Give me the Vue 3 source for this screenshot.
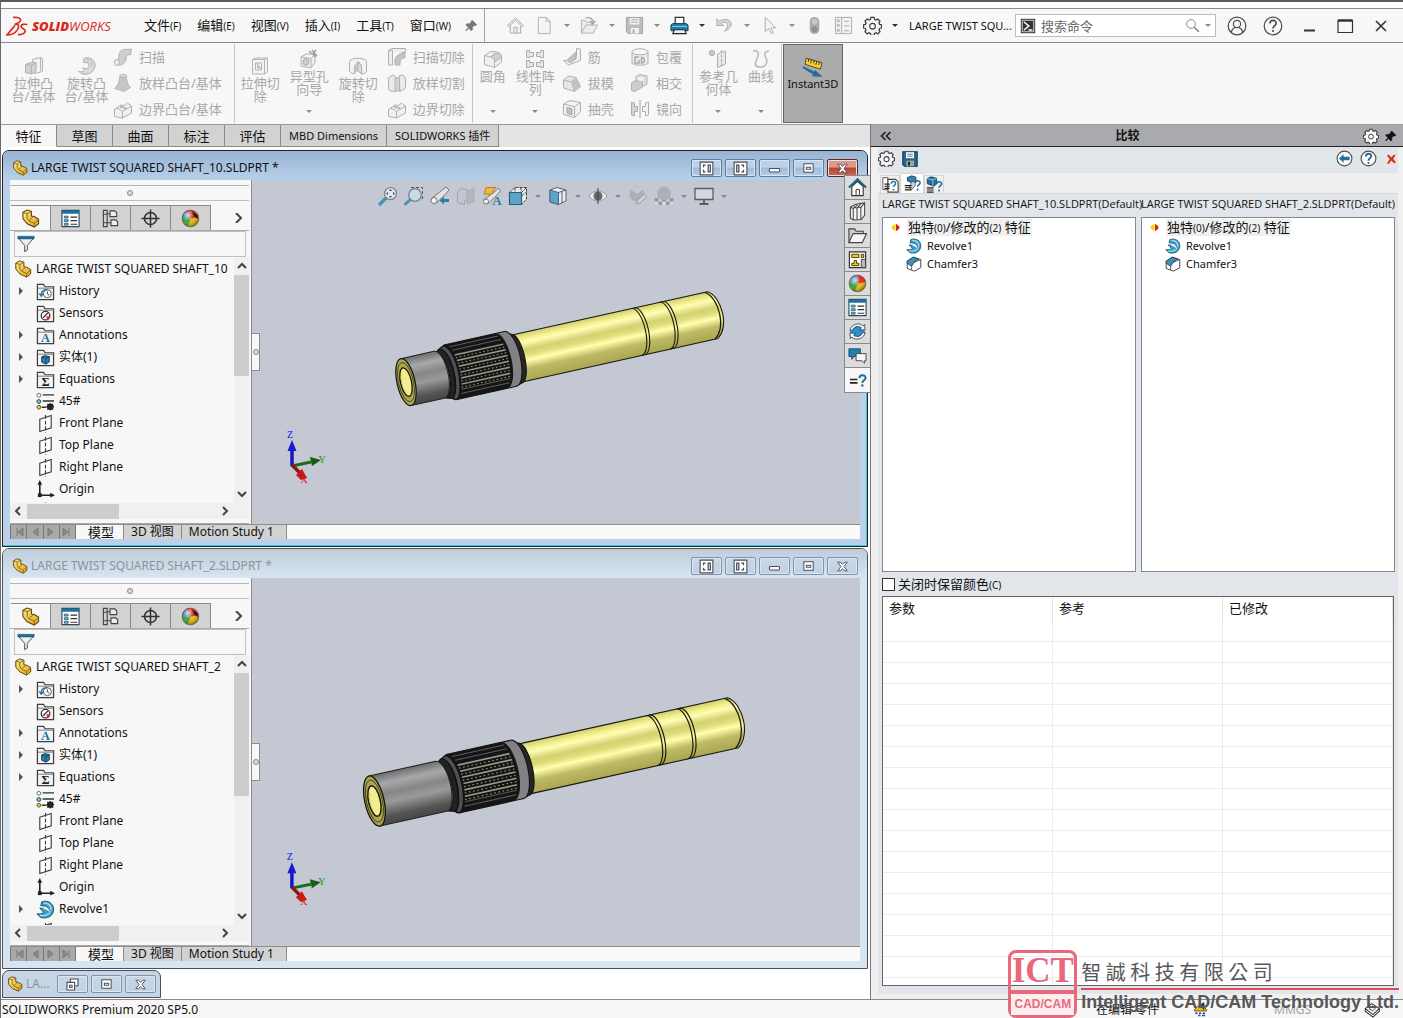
<template>
  <div class="app">
    <svg class="sprite" width="0" height="0" aria-hidden="true">
      <defs>
        <linearGradient id="g-gold" gradientUnits="userSpaceOnUse" x1="0" y1="-23" x2="0" y2="25">
          <stop offset="0" stop-color="#cfcd6c" /><stop offset=".12" stop-color="#f3f08f" /><stop offset=".2" stop-color="#fffdb4" />
          <stop offset=".36" stop-color="#d3d171" /><stop offset=".46" stop-color="#dfdc7a" /><stop offset=".58" stop-color="#ffffae" />
          <stop offset=".76" stop-color="#bdb964" /><stop offset="1" stop-color="#aaa654" />
        </linearGradient>
        <linearGradient id="g-steel" gradientUnits="userSpaceOnUse" x1="0" y1="-24" x2="0" y2="24">
          <stop offset="0" stop-color="#6e6e6e" /><stop offset=".2" stop-color="#a8a8aa" /><stop offset=".4" stop-color="#868688" />
          <stop offset=".58" stop-color="#9a9a9c" /><stop offset=".85" stop-color="#545454" /><stop offset="1" stop-color="#474747" />
        </linearGradient>
        <linearGradient id="g-part" x1="0" y1="0" x2="1" y2="1">
          <stop offset="0" stop-color="#ffe98a" /><stop offset="1" stop-color="#e2a51a" />
        </linearGradient>
        <radialGradient id="g-shine" cx=".35" cy=".3" r=".7">
          <stop offset="0" stop-color="#fff" stop-opacity=".8" /><stop offset=".5" stop-color="#fff" stop-opacity="0" /><stop offset="1" stop-color="#000" stop-opacity=".35" />
        </radialGradient>
      </defs>

      <!-- title bar -->
      <symbol id="i-pin" viewBox="0 0 20 20"><path d="M11 3l6 6-2 1-1-.5-3 3 .2 3.200-1.400 1.300-3.600-3.600L3 17l-.7-.7 3.500-3.600L2.500 9 4 7.800l3 .2 3-3-.3-1z" fill="currentColor" stroke="currentColor" /></symbol>
      <symbol id="i-home" viewBox="0 0 20 20"><path d="M1.500 10L10 2l8.500 8-1.300 1.300L10 4.500l-7.200 6.800zM4.500 10.500V18h11v-7.500M8.500 18v-6h3v6" fill="#f2f2f2" stroke="#a9a9a9" /></symbol>
      <symbol id="i-doc" viewBox="0 0 20 20"><path d="M3.500 1.500h8.500l4 4v13H3.500zM12 1.500v4h4" fill="#f5f5f5" stroke="#b0b0b0" /></symbol>
      <symbol id="i-open" viewBox="0 0 20 20"><path d="M1.500 18V4.500h4l1 2h6V10M1.500 18L6 9.500h12.500L14 18z" fill="#ececec" stroke="#b0b0b0" /><path d="M6 2c5-1 8 1 7.500 5M10.500 5l3 3.500L16 5" fill="none" stroke="#a6a6a6" stroke-width="1.500" /></symbol>
      <symbol id="i-save" viewBox="0 0 20 20"><path d="M1.500 1.500h17v17h-15l-2-2z" fill="#bdbdbd" stroke="#a3a3a3" /><path d="M5 2h10v7H5zM6 12.500h8.500v6H6z" fill="#f1f1f1" /><path d="M6.500 4h7M6.500 6.500h7" stroke="#aaa" /><path d="M8 14h2v4H8z" fill="#a8a8a8" /></symbol>
      <symbol id="i-print" viewBox="0 0 20 20"><path d="M5.500 9V1.500h9V9" fill="#fff" stroke="#333" stroke-width="1.300" /><path d="M1 9.500l2-1.500h14l2 1.500v6H1z" fill="#1f7ea8" stroke="#123f56" /><path d="M2 11h16" stroke="#8cd0ec" /><path d="M4.500 14.500h11l1.500 4H3z" fill="#e8f4fa" stroke="#222" stroke-width="1.200" /></symbol>
      <symbol id="i-undo" viewBox="0 0 20 20"><path d="M2 3v7h7L6.500 7.500C10 5.500 14 7 13 11c-.5 2-1.500 3.500-3 5 4-1.500 7-4 7-7.500C17 3.500 10 2 4.500 5.500z" fill="#d6d6d6" stroke="#ababab" /></symbol>
      <symbol id="i-cursor" viewBox="0 0 20 20"><path d="M5.500 1.500v15l4-3.500 2.300 5.500 2.200-1-2.300-5h5z" fill="#f4f4f4" stroke="#ababab" /></symbol>
      <symbol id="i-traffic" viewBox="0 0 20 20"><rect x="5" y="1" width="10" height="18" rx="5" fill="#a9a9a9" /><circle cx="10" cy="6" r="3" fill="#c7c7c7" /><circle cx="10" cy="14" r="3" fill="#8f8f8f" /></symbol>
      <symbol id="i-list" viewBox="0 0 20 20"><path d="M1.500 1.500h17v17h-17zM8 1.500v17M3.500 4h2v2h-2zM3.500 9h2v2h-2zM3.500 14h2v2h-2zM10.500 5.500H16M10.500 10.500H16M10.500 15.500H16" fill="#f4f4f4" stroke="#ababab" /></symbol>
      <symbol id="i-gear" viewBox="0 0 20 20"><path d="M8.300 1.500h3.400l.5 2 1.500.7 1.900-1.100 2.300 2.300-1.100 1.900.7 1.500 2 .5v3.400l-2 .4-.7 1.500 1.100 1.900-2.300 2.300-1.900-1.100-1.500.7-.5 2H8.300l-.5-2-1.500-.7-1.900 1.100-2.300-2.300 1.100-1.900-.7-1.500-2-.4V9.300l2-.5.7-1.500-1.100-1.900 2.300-2.300 1.900 1.100 1.500-.7z" fill="#f6f6f6" stroke="#3c3c3c" stroke-width="1.300" /><circle cx="10" cy="10.800" r="3" fill="none" stroke="#3c3c3c" stroke-width="1.200" /></symbol>
      <symbol id="i-terminal" viewBox="0 0 20 20"><rect x="1" y="1" width="18" height="18" fill="#333" /><path d="M2.800 2.800h14.400v14.400H2.800z" fill="none" stroke="#fff" /><path d="M5 5l6 5-6 5M10.500 15h5" fill="none" stroke="#fff" stroke-width="2" /></symbol>
      <symbol id="i-search" viewBox="0 0 20 20"><circle cx="8" cy="8" r="5.800" fill="none" stroke="#8a8a8a" stroke-width="1.300" /><path d="M12.500 12.500l6 6" stroke="#8a8a8a" stroke-width="2" /></symbol>
      <symbol id="i-user" viewBox="0 0 20 20"><g fill="none" stroke="#4d4d4d" stroke-width="1.200"><circle cx="10" cy="10" r="8.800" /><circle cx="10" cy="8" r="3.600" /><path d="M4.200 16c.8-3 3-4.200 4-4.500M15.800 16c-.8-3-3-4.200-4-4.500" /></g></symbol>
      <symbol id="i-help" viewBox="0 0 20 20"><circle cx="10" cy="10" r="8.800" fill="none" stroke="#4d4d4d" stroke-width="1.200" /><path d="M7 7.500c0-4 6.200-4 6.200-.3 0 2.400-3.200 2.600-3.200 5.300" fill="none" stroke="#4d4d4d" stroke-width="1.700" /><circle cx="10" cy="15" r="1.100" fill="#4d4d4d" /></symbol>
      <symbol id="i-helpblue" viewBox="0 0 20 20"><circle cx="10" cy="10" r="8.700" fill="#fff" stroke="#4d4d4d" stroke-width="1.300" /><path d="M7 7.500c0-4 6.200-4 6.200-.3 0 2.400-3.200 2.600-3.200 5.300" fill="none" stroke="#1e6f9b" stroke-width="2.200" /><circle cx="10" cy="15.300" r="1.300" fill="#1e6f9b" /></symbol>
      <symbol id="i-back" viewBox="0 0 20 20"><circle cx="10" cy="10" r="8.700" fill="#fff" stroke="#4d4d4d" stroke-width="1.300" /><path d="M3.500 10L9 5v3h7v4H9v3z" fill="#1e6f9b" /></symbol>
      <symbol id="i-redx" viewBox="0 0 20 20"><path d="M4 5l3-1 3.500 4 4-4.500L16.500 5 13 9.700l4 5-2.500 1.500-4-4-4 4.800L4.300 16l4-6z" fill="#dd2a12" /></symbol>
      <symbol id="i-wmin" viewBox="0 0 20 20"><path d="M5 14.500h11" stroke="#333" stroke-width="2" /></symbol>
      <symbol id="i-wmax" viewBox="0 0 20 20"><path d="M3 4.500h14.500v12H3z" fill="none" stroke="#333" stroke-width="1.200" /><path d="M3 4.500h14.500" stroke="#333" stroke-width="2.500" /></symbol>
      <symbol id="i-wclose" viewBox="0 0 20 20"><path d="M5 5l10 10M15 5L5 15" stroke="#333" stroke-width="1.600" /></symbol>

      <!-- ribbon, all disabled -->
      <symbol id="i-extrude" viewBox="0 0 20 20"><g fill="#f3f3f3" stroke="#b4b4b4"><path d="M8.500 3.500l8-2 2 1v13l-8 2-2-1zM16.500 1.500v13" /><path d="M1.500 8.500l5-2h5.500v9l-4.500 2.500-6-1.500z" fill="#d2d2d2" /><path d="M1.500 8.500l6 1 4.500-3M7.500 9.500V18" fill="none" /></g></symbol>
      <symbol id="i-revolve" viewBox="0 0 20 20"><path d="M7 2.500c6-2.500 11.500 1.500 11 7.500S11 20 4 17.500L1.500 15c3 1.500 6 0 6-1.500l-2-1.500c4 1.500 7-.5 6.500-3S9 6 6.500 6.500z" fill="#d9d9d9" stroke="#b0b0b0" /><path d="M9.500 3.500c4 0 6 3 5 6.500" fill="none" stroke="#bbb" /></symbol>
      <symbol id="i-sweep" viewBox="0 0 20 20"><path d="M1.500 14c5 1 4-2 4.500-6s3-6 8-5.500l4.500-.5-1 6c-4-1-4 1-4.500 4s-3 6.500-7.500 6z" fill="#cfcfcf" stroke="#b0b0b0" /><ellipse cx="4" cy="15.500" rx="2.500" ry="3" fill="#eee" stroke="#b0b0b0" /></symbol>
      <symbol id="i-loft" viewBox="0 0 20 20"><path d="M7 2.500h6.500c0 6 1 9 4 12l-6.500 4-9.500-3c3.500-3 5-7 5.500-13z" fill="#c6c6c6" stroke="#b8b8b8" /><ellipse cx="10.200" cy="2.800" rx="3.300" ry="1.300" fill="#e8e8e8" stroke="#b0b0b0" /></symbol>
      <symbol id="i-boundary" viewBox="0 0 20 20"><path d="M1.500 10.500v7l8 1.500 9-5V7l-4-3-3 2.500L8 6z" fill="#f0f0f0" stroke="#b0b0b0" /><path d="M1.500 10.500c3-2 4-1 8 2l9-5.500M9.500 12.500V19" fill="none" stroke="#b0b0b0" /><path d="M7 8c3-1 4 2 6.500 1" stroke="#b9b9b9" fill="none" stroke-width="2" /></symbol>
      <symbol id="i-cutextrude" viewBox="0 0 20 20"><g fill="#f3f3f3" stroke="#b4b4b4"><path d="M2.500 3.500l3-1.500h12v14l-3 2h-12zM2.500 3.500h12v14.500M14.500 3.500l3-1.500" /><path d="M5.500 7h6v7h-6z" /><path d="M7.500 7v5h4" fill="#ccc" /></g></symbol>
      <symbol id="i-hole" viewBox="0 0 20 20"><path d="M2 8l5-3h9v8.500L12 19l-10-2zM2 8l10 1.500L16 5M12 9.500V19" fill="#f0f0f0" stroke="#b0b0b0" /><ellipse cx="7" cy="13" rx="3" ry="3.300" fill="#ccc" stroke="#aaa" /><path d="M10 2l7 6M13 1l5 6M17 1l-3 4" stroke="#9f9f9f" stroke-width="1.400" /></symbol>
      <symbol id="i-cutrevolve" viewBox="0 0 20 20"><path d="M1.500 6c0-5 17-5 17 0v9.500c-1.500 2-3.500 2.500-5 2.500v-8L10 5.500 6.500 10v8c-2-.5-4-1-5-2.500z" fill="#f3f3f3" stroke="#b0b0b0" /><path d="M10 5.500v9.500l-3.500 3v-8z" fill="#c8c8c8" /><path d="M10 5.500v9.500l3.500 3v-8z" fill="#dedede" stroke="#b0b0b0" /></symbol>
      <symbol id="i-cutsweep" viewBox="0 0 20 20"><path d="M1.500 3.500h4V18h-4zM1.500 3.500l3-2h14v4h-4" fill="#ededed" stroke="#b0b0b0" /><path d="M8 18C7 10 10 6.500 18 6.500V11c-4 0-5 2-5 7z" fill="#c3c3c3" stroke="#b4b4b4" /></symbol>
      <symbol id="i-cutloft" viewBox="0 0 20 20"><path d="M1.500 5l4-3 3.500 2v14l-4 .5-3.500-2zM12 3l4-1 2.500 3v10L13 18.500z" fill="#ebebeb" stroke="#b0b0b0" /><path d="M8 5h4.500v13H8z" fill="#d3d3d3" stroke="#b5b5b5" /></symbol>
      <symbol id="i-fillet" viewBox="0 0 20 20"><path d="M1.500 6.500L8 2.500c6 0 10 1 10.500 5V13l-7 5.500-10-3z" fill="#f1f1f1" stroke="#b0b0b0" /><path d="M1.500 6.500l6 1.500c3 .5 4 2 4 5v5.500M7.500 8L12 4" fill="none" stroke="#b0b0b0" /><path d="M8 8l5-4c4 0 5 1.500 5.500 4.500L11.500 13C11.500 10 11 8.500 8 8z" fill="#cfcfcf" stroke="#b5b5b5" /></symbol>
      <symbol id="i-pattern" viewBox="0 0 20 20"><g fill="#e5e5e5" stroke="#ababab"><path d="M1.500 1.500h3v2h4v4h-4v1h-3zM11.500 3.500h4v-2h3v7h-3v-1h-4zM1.500 11.500h3v2h4v4h-4v1h-3zM11.500 13.500h4v-2h3v7h-3v-1h-4z" /></g></symbol>
      <symbol id="i-rib" viewBox="0 0 20 20"><path d="M1.500 13.500l5 4.500 12-4.500V2l-4-.5v8L9 14z" fill="#f0f0f0" stroke="#b0b0b0" /><path d="M5 13l9-8v7l-6 4z" fill="#c2c2c2" stroke="#b0b0b0" /></symbol>
      <symbol id="i-draft" viewBox="0 0 20 20"><path d="M1.500 15V7L7 3l7 1.500 4.500 9-6 5z" fill="#e6e6e6" stroke="#b0b0b0" /><path d="M1.500 7l8 2L14 4.500M9.500 9l3 9.500" fill="none" stroke="#b0b0b0" /><path d="M9.500 9L14 4.500l4.500 9-6 5z" fill="#c2c2c2" /></symbol>
      <symbol id="i-shell" viewBox="0 0 20 20"><path d="M1.500 5L8 1.500l10.500 2V13l-6 5.500-11-3zM1.500 5l11 2.500 6-4M12.500 7.500v11" fill="#f0f0f0" stroke="#b0b0b0" /><path d="M5 8.500l5 1.200v6l-5-1.200z" fill="#c0c0c0" stroke="#aaa" /></symbol>
      <symbol id="i-wrap" viewBox="0 0 20 20"><path d="M2 5v11c0 3 16 3 16 0V5" fill="#ececec" stroke="#b0b0b0" /><ellipse cx="10" cy="4.800" rx="8" ry="3" fill="#f6f6f6" stroke="#b0b0b0" /><path d="M9 10H5v6h4v-3M11.500 10.500v5.500c4 .5 4-6 0-5.500z" fill="none" stroke="#a9a9a9" stroke-width="1.500" /></symbol>
      <symbol id="i-intersect" viewBox="0 0 20 20"><path d="M6 3.500L10 1.500l7 1.500v8l-4 2.500-7-2z" fill="#dedede" stroke="#b0b0b0" /><path d="M1.500 10l3-2h8v6L4.500 18.500l-3-1z" fill="#cdcdcd" stroke="#b0b0b0" /><ellipse cx="11" cy="6" rx="3" ry="2" fill="#f3f3f3" /></symbol>
      <symbol id="i-mirror" viewBox="0 0 20 20"><path d="M1.500 3l3 1v3.500h3v5h-3V17l-3-1z" fill="#d2d2d2" stroke="#adadad" /><path d="M18.500 3l-3 1v3.500h-3v5h3V17l3-1z" fill="#f3f3f3" stroke="#adadad" /><path d="M10 1v18" stroke="#a2a2a2" /></symbol>
      <symbol id="i-refgeo" viewBox="0 0 20 20"><circle cx="4" cy="4" r="2.700" fill="#c9c9c9" stroke="#b0b0b0" /><path d="M9.500 5l8-3v13l-8 3.500z" fill="#e9e9e9" stroke="#b0b0b0" /><path d="M13.500 1v18" stroke="#a8a8a8" stroke-dasharray="3 1.500" /></symbol>
      <symbol id="i-curve" viewBox="0 0 20 20"><path d="M2 2c4-1 6 1 5 5s-6 10 1 11 9-5 7-9-2-6 3-7" fill="none" stroke="#b8b8b8" stroke-width="1.500" /></symbol>
      <symbol id="i-instant" viewBox="0 0 20 20"><path d="M4 2l15 4.500-1.500 6L3 8z" fill="#f8cf36" stroke="#3c3210" stroke-width=".8" /><path d="M6.500 2.800L6 5.500M9 3.500l-.8 3.500M11.500 4.200L11 7M14 5l-.8 3.500M16.500 5.800L16 8.500" stroke="#3c3210" stroke-width=".9" /><path d="M1 10l11 5.200.5-1.700 6.500 6-9-.5.800-1.700L1 11.500z" fill="#1e719c" stroke="#1e719c" stroke-width=".6" /></symbol>

      <!-- feature tree -->
      <symbol id="i-part" viewBox="0 0 20 20"><path d="M2 3.500L6.500 1 11 2.500v5l3 .5 4.500 2.500v5L14 19 6.500 15.500 2 10z" fill="url(#g-part)" stroke="#5d4308" stroke-width="1.100" /><path d="M2 3.500L6.500 5v5l2 2.500 5.500 2.500V19M6.500 5L11 2.500M8.500 12l4-3.500M14 15l4.500-4" fill="none" stroke="#7b5a0d" stroke-width=".9" /></symbol>
      <symbol id="i-props" viewBox="0 0 20 20"><path d="M1 1.500h18v17H1z" fill="#fff" stroke="#2c4a5a" stroke-width="1.200" /><path d="M1 1.500h18v3.500H1z" fill="#1e6f9b" /><path d="M3.500 7.500h4v2h-4zM3.500 11.200h4v2h-4zM3.500 15h4v2h-4z" fill="#7cc0df" stroke="#1b4c66" stroke-width=".8" /><path d="M10 8.500h7M10 12.200h7M10 16h7" stroke="#333" stroke-width="1.200" /></symbol>
      <symbol id="i-config" viewBox="0 0 20 20"><path d="M2.500 1.500h4v17h-4zM2.500 5.500h4M2.500 14.500h4M6.500 5h3M6.500 14.500h4" fill="none" stroke="#444" stroke-width="1.200" /><path d="M9.500 2h5l2 2v4h-7zM10.500 11.500h5l2 2v4h-7z" fill="#eee" stroke="#444" stroke-width="1.200" /></symbol>
      <symbol id="i-dim" viewBox="0 0 20 20"><circle cx="10" cy="10" r="6.300" fill="none" stroke="#333" stroke-width="1.700" /><path d="M10 .5v19M.5 10h19" stroke="#333" stroke-width="1.600" /></symbol>
      <symbol id="i-ball" viewBox="0 0 20 20"><circle cx="10" cy="10" r="8.800" fill="#e8b716" /><path d="M10 10L1.500 8C3 2 7 1 10 1.200z" fill="#2f76c4" /><path d="M10 10V1.200c5 0 8 3.500 8.600 7.300z" fill="#d8261d" /><path d="M10 10L1.500 8c-1 5 2 9.500 6 10.500z" fill="#3aa33a" /><circle cx="10" cy="10" r="8.800" fill="url(#g-shine)" stroke="#555" stroke-width=".7" /></symbol>
      <symbol id="i-ballcut" viewBox="0 0 20 20"><circle cx="10" cy="10" r="8.800" fill="#e8b716" /><path d="M10 10L1.500 8C3 2 7 1 10 1.200z" fill="#d8261d" /><path d="M10 10V1.200c5 0 8 3.500 8.600 7.300z" fill="#d8261d" /><path d="M10 10L1.200 9.500C1.500 4 4 3 6 2.500z" fill="#2f76c4" /><path d="M10 10L1.200 9c-.5 5 2.300 8.500 6.300 9.500z" fill="#3aa33a" /><circle cx="10" cy="10" r="8.800" fill="url(#g-shine)" stroke="#555" stroke-width=".7" /><path d="M11.500 3l5.500 3 1 4.500-3.500-2z" fill="#1d1d1d" /></symbol>
      <symbol id="i-filter" viewBox="0 0 20 20"><path d="M1.500 3.500l7 8v7l3-1.800v-5.200l7-8z" fill="#eaf1f5" stroke="#444" /><path d="M1 1.500h18v2.800H1z" fill="#1e6f9b" stroke="#174f6d" stroke-width=".7" /></symbol>
      <symbol id="i-folder" viewBox="0 0 20 20"><path d="M1.500 18.500V2.500h6.500l1.500 2.500h9v13.500z" fill="#f3f3f3" stroke="#3f3f3f" stroke-width="1.300" /><path d="M2 6.500h16.500" stroke="#777" /></symbol>
      <symbol id="i-history" viewBox="0 0 20 20"><use href="#i-folder" /><circle cx="12" cy="12.300" r="4.200" fill="#fff" stroke="#555" /><path d="M12 10v2.500l2 1.500" stroke="#333" fill="none" /><path d="M5.500 13.500c0-3 2-5.500 6.500-5.500M3.500 12l2 3 2.500-3" stroke="#1e6f9b" stroke-width="1.400" fill="none" /></symbol>
      <symbol id="i-sensors" viewBox="0 0 20 20"><use href="#i-folder" /><circle cx="10" cy="12.300" r="4.500" fill="#fff" stroke="#333" stroke-width="1.300" /><path d="M7.500 14.500l5-5" stroke="#333" stroke-width="1.300" /><path d="M11 13h4c0 2-1.500 3.500-3.500 3.700z" fill="#d8341d" /></symbol>
      <symbol id="i-solid" viewBox="0 0 20 20"><use href="#i-folder" /><path d="M6 9.500L9 8l5 1v5.500L10.500 17 6 15z" fill="#2a83ad" stroke="#123f56" /><path d="M6 9.500l4.500 1.500L14 9M10.500 11v6" stroke="#123f56" fill="none" /></symbol>
      <symbol id="i-material" viewBox="0 0 20 20"><circle cx="3" cy="3.500" r="2" fill="#fff" stroke="#666" /><circle cx="3" cy="10" r="2" fill="#7cc0df" stroke="#245" /><circle cx="3" cy="16" r="2" fill="#f3c321" stroke="#654" /><path d="M7 3h12M7 9.500h12M6 16h5" stroke="#333" stroke-width="1.500" /><circle cx="15" cy="15.500" r="2.500" fill="none" stroke="#222" stroke-width="2" /><path d="M15 11.500v8M11 15.500h8M12 12.500l6 6M18 12.500l-6 6" stroke="#222" stroke-width="1.100" /></symbol>
      <symbol id="i-plane" viewBox="0 0 20 20"><path d="M4 5.500l12-4v13l-12 4z" fill="#fff" stroke="#3c3c3c" stroke-width="1.200" /><path d="M10 1v18.500" stroke="#3c3c3c" stroke-width="1.200" stroke-dasharray="4 2" /></symbol>
      <symbol id="i-origin" viewBox="0 0 20 20"><path d="M4 3v13h13" fill="none" stroke="#222" stroke-width="1.700" /><path d="M4 0L1.500 5h5zM20 16l-5-2.500v5z" fill="#222" /><path d="M2 14h4v4H2z" fill="#222" /></symbol>
      <symbol id="i-revblue" viewBox="0 0 20 20"><path d="M6 2C13-.5 19 4 18.500 10.500S12 20 5 18.500L1 14.500c3 .5 5.500 0 7-1.500L4 8.500 9 9 14 13c.5-3-1.500-5.500-4-6.500L5 6z" fill="#3d9fc9" stroke="#16506d" /><path d="M8 3c5 0 8 3 8 8M4 16c5 1.500 10-.5 11-4" fill="none" stroke="#a8def2" stroke-width="1.400" /><path d="M4.500 7.500l8 1 2.500 4.500-7-4z" fill="#eef7fb" /></symbol>
      <symbol id="i-chamfer" viewBox="0 0 20 20"><path d="M1.500 6.500L9 1.500l9.500 3v10l-8 4.500-9-3.500z" fill="#fff" stroke="#444" stroke-width="1.200" /><path d="M9 1.500l7 2.200-6 4.300-3 5-5.500-4v-2.500z" fill="#3c93ba" stroke="#235" /><path d="M10 8l8.500-3.500M7 13v4.500" stroke="#444" fill="none" /></symbol>
      <symbol id="i-diff" viewBox="0 0 20 20"><path d="M10 3v14L3 12V8z" fill="#f6d500" /><path d="M11 3v14l6-5V8z" fill="#d61b10" /></symbol>

      <!-- heads-up view toolbar -->
      <symbol id="i-zoomfit" viewBox="0 0 20 20"><path d="M2 18l6-6" stroke="#4a90b5" stroke-width="3.200" stroke-linecap="round" /><circle cx="12.500" cy="7.500" r="6" fill="#dfe3ea" stroke="#7a7d84" stroke-width="1.200" /><path d="M12.500 3l1.500 2h-3zM12.500 12l1.500-2h-3zM8 7.500L10 6v3zM17 7.500L15 6v3z" fill="#44484f" /></symbol>
      <symbol id="i-zoomarea" viewBox="0 0 20 20"><path d="M7 1.500h11.500V15" fill="none" stroke="#555" stroke-dasharray="3 2" /><path d="M1.500 18l5-4.500" stroke="#4a90b5" stroke-width="3" stroke-linecap="round" /><circle cx="11" cy="9" r="6.300" fill="#c5dbe8" stroke="#7a7d84" stroke-width="1.200" /></symbol>
      <symbol id="i-prevview" viewBox="0 0 20 20"><path d="M1 13l10-8 5-4 3 3-3.500 4-9 9z" fill="#e2e2e2" stroke="#777" /><circle cx="4" cy="14.500" r="3" fill="#f5f5f5" stroke="#777" /><path d="M9.500 14.500l4.500-4v2.500h5v3h-5v2.500z" fill="#2d7fa8" /></symbol>
      <symbol id="i-section" viewBox="0 0 20 20"><g opacity=".8"><path d="M1.500 6l4-3.500 6 1v10l-3 1v4l-7-2z" fill="#c5c7cc" stroke="#9a9ca2" /><path d="M11 5l7-2.500v13L11 18z" fill="#b2b4ba" stroke="#9a9ca2" stroke-dasharray="2 1" /></g></symbol>
      <symbol id="i-dynamic" viewBox="0 0 20 20"><path d="M4 1.500h10L10 6h4l-8 6 2-4H2z" fill="#f4b63a" stroke="#b46f11" stroke-width=".8" /><path d="M1.500 14l11-8 4-4 2 3-3.500 4-9 8.500z" fill="#e4e4e4" stroke="#777" /><circle cx="4" cy="15.500" r="2.500" fill="#f5f5f5" stroke="#777" /></symbol>
      <symbol id="i-orient" viewBox="0 0 20 20"><path d="M1.500 6.500L7 1.500h11.500V13l-5 5.500M13.500 6.500l5-5M7 1.500v5M13 1.500v5M13.500 10l5-4" fill="#e9ebef" stroke="#444" stroke-width="1" stroke-dasharray="3 1" /><path d="M1.500 6.500h12v12h-12z" fill="#5da4c7" stroke="#24617c" stroke-width="1.200" /></symbol>
      <symbol id="i-display" viewBox="0 0 20 20"><path d="M2 4l7-2.500L18 4v11l-7.500 3.500L2 16z" fill="#e8eef2" stroke="#56616a" /><path d="M2 4l8.500 2.500V18.500L2 16z" fill="#5da4c7" stroke="#3c6d86" /><path d="M10.500 6.500L18 4M14 5.500V17" stroke="#56616a" fill="none" /></symbol>
      <symbol id="i-eye" viewBox="0 0 20 20"><path d="M1 10c4-6.500 14-6.500 18 0-4 6.500-14 6.500-18 0z" fill="#ececef" stroke="#9a9ca1" /><circle cx="10" cy="10" r="4.500" fill="#66696f" /><path d="M10 2v16" stroke="#3b3d42" /></symbol>
      <symbol id="i-editapp" viewBox="0 0 20 20"><g opacity=".8"><circle cx="9" cy="8" r="7.500" fill="#a7a9af" /><path d="M9 8L3 3.500C6 .5 12 0 15 3.500z" fill="#c6c8cd" /><path d="M8 18l1.500-4 7-6 2.500 2.500-7 6.500z" fill="#d0d2d6" stroke="#8f9197" /></g></symbol>
      <symbol id="i-scene" viewBox="0 0 20 20"><g opacity=".85"><path d="M.5 12h19v7H.5z" fill="#d4d6da" /><circle cx="10" cy="7.500" r="7" fill="#a9abb1" /><path d="M.5 12h4v3.500h-4zM4.500 15.500H8V19H4.500zM8 14h4v1.500H8zM12 15.500h3.500V19H12zM15.500 12h4v3.500h-4z" fill="#8f9197" /></g></symbol>
      <symbol id="i-monitor" viewBox="0 0 20 20"><path d="M1 2.500h18v11H1z" fill="#d3d6dc" stroke="#5b5d62" stroke-width="1.300" /><path d="M10 13.500v4M5.500 18h9" stroke="#5b5d62" stroke-width="1.800" /></symbol>

      <!-- task pane -->
      <symbol id="i-house" viewBox="0 0 20 20"><path d="M4 9v9.500h12V9L10 3.500z" fill="#fff" stroke="#333" stroke-width="1.200" /><path d="M8.500 18.500V12h3.500v6.500" fill="none" stroke="#333" /><path d="M1 10l9-8.500L19 10" fill="none" stroke="#1f5f80" stroke-width="2.300" /></symbol>
      <symbol id="i-library" viewBox="0 0 20 20"><path d="M2.500 5.500L7 3l3-1 7.500-1v13L14 18.500 5.500 19l-3-2z" fill="#f4f4f4" stroke="#444" stroke-width="1.100" /><path d="M2.500 5.500L5.500 7v12M5.500 7L10 3M6 5l3.500 1.500v12M9.500 6.500L13.500 2M10 5l3.500 1v12.500M13.500 6l4-5" fill="none" stroke="#444" stroke-width="1.100" /></symbol>
      <symbol id="i-explorer" viewBox="0 0 20 20"><path d="M1 17.500V3h6l1.500 2.500H16V8" fill="#ccc" stroke="#444" stroke-width="1.200" /><path d="M1 17.500L5.500 8H19.500L15 17.500z" fill="#f6f6f6" stroke="#444" stroke-width="1.200" /></symbol>
      <symbol id="i-palette" viewBox="0 0 20 20"><path d="M1.500 2h17v16.500h-17z" fill="#fff" stroke="#333" stroke-width="1.300" /><path d="M4 4.500h7.500v3.500H4zM14 4.500h2.500v3.500H14zM4 14h2.500v-3H9v3h2.500v2.500H4z" fill="#f3c321" stroke="#4b3a08" /><path d="M14 10h4.500v8.500H14z" fill="#bbb" stroke="#444" /></symbol>
      <symbol id="i-refresh" viewBox="0 0 20 20"><circle cx="10" cy="10" r="7.500" fill="#2f8fd0" /><path d="M2 9C3 2 12 0 16 4l1.500-1.500.5 6-6-.5 2-2C10 3.500 6 5 4.500 9zM18 11c-1 7-10 9-14 5l-1.500 1.500-.5-6 6 .5-2 2c4 2.500 8 1 9.500-3z" fill="#f3f7fa" stroke="#28424f" stroke-width=".9" /></symbol>
      <symbol id="i-forum" viewBox="0 0 20 20"><path d="M1 3h12v8H6.500L4 14v-3H1z" fill="#2581ab" stroke="#174f6d" /><path d="M8.500 8H19v7.500h-1.500V18L14.500 15.500h-6z" fill="#f5f5f5" stroke="#444" /></symbol>
      <symbol id="i-compare" viewBox="0 0 20 20"><path d="M2 9h8M2 12.500h8" stroke="#222" stroke-width="1.700" /><path d="M12 7.500c0-4 6.500-4 6.500-.3 0 2.600-3.400 2.600-3.400 5.300" fill="none" stroke="#1e6f9b" stroke-width="2" /><circle cx="15.100" cy="15.300" r="1.300" fill="#1e6f9b" /></symbol>

      <!-- compare panel -->
      <symbol id="i-saveblue" viewBox="0 0 20 20"><path d="M1 1h18v18H3l-2-2z" fill="#21698e" stroke="#173443" stroke-width="1.300" /><path d="M5 1.500h10V9H5z" fill="#fff" /><path d="M6.500 4h7M6.500 6.500h7" stroke="#555" /><path d="M5.500 12h9.500v7H5.500z" fill="#9aa4aa" /><path d="M7.500 13.500H10V18H7.500z" fill="#222" /></symbol>
      <symbol id="i-cmpdoc" viewBox="0 0 20 20"><path d="M1 2h6v14H1z" fill="#fff" stroke="#444" /><path d="M7 4h9l3 3v12H7z" fill="#fff" stroke="#444" stroke-width="1.300" /><path d="M3 9.500h6M3 12h6M3 14.500h6" stroke="#222" stroke-width="1.300" /><path d="M11 9c0-3.500 5-3.500 5-.3 0 2-2.500 2.300-2.500 4.300" fill="none" stroke="#1e6f9b" stroke-width="1.700" /><circle cx="13.500" cy="16" r="1.100" fill="#1e6f9b" /></symbol>
      <symbol id="i-cmpfeat" viewBox="0 0 20 20"><path d="M4 3l5-2 5 1.500v4L10 9 4 7z" fill="#2b86b1" stroke="#173f54" /><path d="M9 8c4-1 5 2 4 5l-4 4-3-2z" fill="#cfcfcf" stroke="#555" /><path d="M1 12.500h8M1 15h8M1 17.500h8" stroke="#222" stroke-width="1.300" /><path d="M13.500 9.500c0-3.500 5.500-3.500 5.500-.3 0 2-3 2.300-3 4.600" fill="none" stroke="#1e6f9b" stroke-width="1.800" /><circle cx="16" cy="17" r="1.200" fill="#1e6f9b" /></symbol>
      <symbol id="i-cmpgeo" viewBox="0 0 20 20"><path d="M1.500 3l4-2 7 1.500v7L9 12 1.500 9z" fill="#1e6f9b" stroke="#173f54" /><path d="M1.500 3L8 4.500l4.500-2M8 4.500V12" stroke="#9fd2e8" fill="none" /><path d="M1 14h8M1 16.500h8M1 19h8" stroke="#222" stroke-width="1.300" /><path d="M12.500 9.500c0-3.500 6-3.500 6-.3 0 2-3.200 2.300-3.200 4.600" fill="none" stroke="#1e6f9b" stroke-width="1.800" /><circle cx="15.300" cy="17" r="1.200" fill="#1e6f9b" /></symbol>

      <!-- document window buttons -->
      <symbol id="i-tileleft" viewBox="0 0 20 20"><path d="M2.500 2.500h15v15h-15z" fill="#fff" stroke="#4a4f5c" stroke-width="1.300" /><path d="M9 6H6.500v2.500M9 14H6.500v-2.500M12 6h2.500v8H12z" fill="none" stroke="#4a4f5c" stroke-width="1.500" /></symbol>
      <symbol id="i-tileright" viewBox="0 0 20 20"><path d="M2.500 2.500h15v15h-15z" fill="#fff" stroke="#4a4f5c" stroke-width="1.300" /><path d="M11 6h2.500v2.500M11 14h2.500v-2.500M5.500 6H8v8H5.500z" fill="none" stroke="#4a4f5c" stroke-width="1.500" /></symbol>
      <symbol id="i-min" viewBox="0 0 20 20"><rect x="4" y="10" width="12" height="4" rx="1" fill="#fff" stroke="#4a4f5c" stroke-width="1.200" /></symbol>
      <symbol id="i-max" viewBox="0 0 20 20"><path d="M4.500 4.500h11v10h-11z" fill="#fff" stroke="#4a4f5c" stroke-width="1.200" /><path d="M7.500 8.500h5v2.500h-5z" fill="#fff" stroke="#4a4f5c" stroke-width="1.200" /></symbol>
      <symbol id="i-restore" viewBox="0 0 20 20"><path d="M7.500 3.500h9v8h-9z" fill="#fff" stroke="#4a4f5c" stroke-width="1.300" /><path d="M3.500 7.500h9v9h-9z" fill="#fff" stroke="#4a4f5c" stroke-width="1.300" /><path d="M6.500 11h3v2.500h-3z" fill="none" stroke="#4a4f5c" stroke-width="1.200" /></symbol>
      <symbol id="i-x" viewBox="0 0 20 20"><path d="M4.500 5h3.200L10 7.500 12.300 5h3.200l-3.700 5 3.700 5h-3.200L10 12.500 7.700 15H4.500l3.700-5z" fill="#fff" stroke="#4a4f5c" stroke-width="1.100" /></symbol>
      <symbol id="i-rebuild" viewBox="0 0 20 20"><path d="M2 10l8-8 8 8v2H2z" fill="#f3b51d" stroke="#3c3210" /><path d="M8 6l6-4v8" stroke="#222" stroke-width="2" fill="none" /><path d="M3 14h3v2H3zM8 14h3v2H8zM13 14h3v2h-3zM7 17h3v2H7zM12 17h4v2h-4z" fill="#1e4f7a" /></symbol>
      <symbol id="i-tag" viewBox="0 0 20 20"><path d="M1.500 9L9 3l9 6-7.500 7zM1.500 9v3l9 7 7.500-7V9" fill="#fff" stroke="#333" stroke-width="1.200" /><path d="M6 9l4-3 3.500 2.500-3.500 3z" fill="none" stroke="#333" /></symbol>
    </svg>

    <header class="titlebar">
      <div class="brand">
        <svg class="brand-mark" viewBox="0 0 22 20" aria-hidden="true">
          <path d="M7 1.500c4-.5 8 .3 7.500 2.800S11.500 7.500 8.500 8.500M9.500 8c4-.5 4 4 .5 7.500-2.500 2.500-6 3.500-9 3.500L9 9.500M21.500 8.500c-3.500-.5-6.500-.5-6.500 1.800s5 2.500 4 5.500-4 2.900-7 2.900" fill="none" stroke="#da291c" stroke-width="1.700" />
        </svg>
        <span class="brand-name"><b>SOLID</b>WORKS</span>
      </div>
      <nav class="menu">
        <button v-for="m in menus" :key="m.key" type="button">{{ m.label }}<small>({{ m.key }})</small></button>
      </nav>
      <button type="button" class="ib pinned" aria-label="固定"><Icon name="pin" :size="15" /></button>
      <div class="quick">
        <template v-for="q in quick" :key="q.icon">
          <button type="button" class="ib" :aria-label="q.icon"><Icon :name="q.icon" :size="19" /></button>
          <span v-if="q.drop" class="caret" :class="{ dark: q.dark }"></span>
        </template>
      </div>
      <span class="doc-name">LARGE TWIST SQU...</span>
      <label class="search">
        <Icon name="terminal" :size="16" />
        <input v-model="query" type="text" placeholder="搜索命令" aria-label="搜索命令" />
        <Icon name="search" :size="15" />
        <span class="caret"></span>
      </label>
      <div class="sys">
        <button v-for="s in ['user', 'help', 'wmin', 'wmax', 'wclose']" :key="s" type="button" class="ib" :aria-label="s"><Icon :name="s" :size="20" /></button>
      </div>
    </header>

    <div class="ribbon">
      <div v-for="(g, gi) in ribbon" :key="gi" class="group" :class="'group-' + gi">
        <template v-for="(c, ci) in g" :key="ci">
          <button v-if="c.label" type="button" class="big" :class="{ drop: c.drop, narrow: c.narrow }" disabled>
            <Icon :name="c.icon" :size="20" />
            <span v-for="line in c.label" :key="line">{{ line }}</span>
            <i v-if="c.drop" class="caret"></i>
          </button>
          <div v-else class="stack">
            <button v-for="s in c.items" :key="s[1]" type="button" class="small" disabled>
              <Icon :name="s[0]" :size="20" />{{ s[1] }}
            </button>
          </div>
        </template>
      </div>
      <button type="button" class="instant"><Icon name="instant" :size="21" />Instant3D</button>
    </div>

    <main class="body">
      <section class="left">
        <div class="cmd-tabs">
          <button v-for="t in cmdTabs" :key="t" type="button" :class="{ on: t === cmdTab }" @click="cmdTab = t">{{ t }}</button>
        </div>
        <div class="mdi">
          <article v-for="d in docs" :key="d.title" class="win" :class="{ active: d.active }">
            <header class="win-title">
              <Icon name="part" :size="16" />
              <h2>{{ d.title }}</h2>
              <button v-for="b in ['tileleft', 'tileright', 'min', 'max', 'x']" :key="b" type="button" class="wb" :class="{ close: b === 'x' }" :aria-label="b">
                <Icon :name="b" :size="17" />
              </button>
            </header>
            <div class="win-main">
              <aside class="pane">
                <div class="splitter"><i></i></div>
                <div class="pane-tabs">
                  <button v-for="(p, i) in ['part', 'props', 'config', 'dim', 'ballcut']" :key="p" type="button" :class="{ on: i === 0 }" :aria-label="p"><Icon :name="p" :size="19" /></button>
                  <button type="button" class="more" aria-label="更多"><svg viewBox="0 0 10 10" width="10" height="10"><path d="M2 0l5 5-5 5" /></svg></button>
                </div>
                <div class="filter"><Icon name="filter" :size="18" /><input type="text" aria-label="过滤" /></div>
                <div class="tree-box">
                  <ul class="tree" :class="{ tall: !d.active }">
                    <li class="root"><Icon name="part" :size="18" />{{ d.root }}</li>
                    <li v-for="n in d.nodes" :key="n.label">
                      <i class="arrow" :class="{ show: n.open }"></i><Icon :name="n.icon" :glyph="n.glyph" :size="19" />{{ n.label }}
                    </li>
                  </ul>
                  <div class="vbar">
                    <svg viewBox="0 0 10 10" width="10" height="10"><path d="M1 7l4-4 4 4" /></svg>
                    <i :class="{ tall: !d.active }"></i>
                    <svg viewBox="0 0 10 10" width="10" height="10"><path d="M1 3l4 4 4-4" /></svg>
                  </div>
                </div>
                <div class="hbar">
                  <svg viewBox="0 0 10 10" width="10" height="10"><path d="M7 1L3 5l4 4" /></svg>
                  <i></i>
                  <svg viewBox="0 0 10 10" width="10" height="10"><path d="M3 1l4 4-4 4" /></svg>
                </div>
                <div class="pane-end"></div>
              </aside>
              <div class="view">
                <svg class="scene" :viewBox="d.box" preserveAspectRatio="xMinYMin meet" role="img" :aria-label="d.root">
                  <g :transform="d.place" stroke-linejoin="round">
                    <path d="M74-23H272C279-19 282-8 282 1S279 20 272 25H74z" fill="url(#g-gold)" stroke="#17170a" stroke-width="1" />
                    <path d="M269-23C276-19 279-8 279 1S276 20 269 25" fill="none" stroke="#1b1b0c" stroke-width="1.200" />
                    <g fill="none" stroke="#1b1b0c" stroke-width="1.100">
                      <path d="M194-23A9 24 0 0 1 194 25M197-23A9 24 0 0 1 197 25M223-23A9 24 0 0 1 223 25M226-23A9 24 0 0 1 226 25" />
                    </g>
                    <path d="M64-27L71-24A8 24 0 0 1 71 26L64 28z" fill="#262626" stroke="#111" />
                    <path d="M3-28H65A10 28 0 0 1 65 28H3A10 28 0 0 1-1-25z" fill="#828286" stroke="#151515" />
                    <path d="M3-28H56A10 28 0 0 1 56 28H3z" fill="#151515" />
                    <path v-for="t in teeth" :key="t.y" :d="t.d" fill="none" :stroke="t.c" :stroke-width="t.w" />
                    <path v-for="t in flutes" :key="'f' + t.y" :d="t.d" fill="none" stroke="#aba73c" stroke-width="1" stroke-dasharray="1.500 2.500" />
                    <path d="M1-27A10 28 0 0 1 4 28L0 26A9 25 0 0 0-4-24z" fill="#505053" stroke="#111" />
                    <path d="M-7-22A9 23 0 0 1-7 24L0 26A9 26 0 0 0-3-25z" fill="#222" stroke="#111" />
                    <path :d="`M${d.tip}-24H-8A9 24 0 0 1-8 24H${d.tip}z`" fill="url(#g-steel)" stroke="#222" />
                    <ellipse :cx="d.tip" cy="0" rx="9" ry="24" fill="#a9a552" stroke="#14140a" stroke-width="1.200" />
                    <ellipse :cx="d.tip" cy="0" rx="7.500" ry="20" fill="none" stroke="#2b2a10" stroke-width=".7" />
                    <ellipse :cx="d.tip" cy="0" rx="5.500" ry="14.500" fill="#f2ee8f" stroke="#14140a" stroke-width="1.300" />
                    <path :d="`M${d.tip}-14A5.500 14.500 0 0 0 ${d.tip} 14A9 16 0 0 1 ${d.tip}-14z`" fill="#b5b15b" />
                  </g>
                  <g :transform="d.triad" font-family="Liberation Serif, serif" font-size="10" text-anchor="middle">
                    <path d="M0 0V-16" stroke="#1616c4" stroke-width="3.500" /><path d="M-4.500-15L0-26 4.500-15z" fill="#1919d2" />
                    <path d="M0 0l19-4" stroke="#1b6b1b" stroke-width="3" /><path d="M18-9l11 3-9 6z" fill="#185c18" />
                    <path d="M0-1l8 8" stroke="#8c1515" stroke-width="3.500" /><path d="M4 9l6-6 5 9-6 2z" fill="#c51717" />
                    <text x="-2" y="-28" fill="#1010ff">Z</text><text x="30" y="-3" fill="#0a9a0a">Y</text><text x="12" y="17" fill="#f01010">X</text>
                  </g>
                </svg>
                <div v-if="d.active" class="hud">
                  <template v-for="t in hud" :key="t.icon">
                    <button type="button" class="ib" :aria-label="t.icon"><Icon :name="t.icon" :glyph="t.glyph" :size="20" /></button>
                    <span v-if="t.drop" class="caret"></span>
                  </template>
                </div>
                <div class="handle"><i></i></div>
              </div>
            </div>
            <footer class="sheets">
              <span class="nav">
                <button v-for="(p, i) in navPaths" :key="i" type="button" aria-label="nav"><svg viewBox="0 0 10 10" width="10" height="10"><path :d="p" /></svg></button>
              </span>
              <button v-for="(s, i) in ['模型', '3D 视图', 'Motion Study 1']" :key="s" type="button" class="sheet" :class="{ on: i === 0 }">{{ s }}</button>
            </footer>
          </article>
          <div class="mini">
            <Icon name="part" :size="16" /><span>LA...</span>
            <button v-for="b in ['restore', 'max', 'x']" :key="b" type="button" class="wb" :aria-label="b"><Icon :name="b" :size="17" /></button>
          </div>
        </div>
        <div class="task-tabs">
          <button v-for="t in taskTabs" :key="t" type="button" :class="{ on: t === 'compare' }" :aria-label="t"><Icon :name="t" :size="19" /></button>
        </div>
      </section>

      <section class="panel">
        <header class="panel-head">
          <svg viewBox="0 0 12 10" width="12" height="10"><path d="M5.500 1l-4 4 4 4M10.500 1l-4 4 4 4" fill="none" stroke="#222" stroke-width="1.700" /></svg>
          <h1>比较</h1>
          <Icon name="gear" :size="16" /><Icon name="pin" :size="14" />
        </header>
        <div class="panel-body">
          <div class="tools">
            <button type="button" class="ib" aria-label="选项"><Icon name="gear" :size="17" /></button>
            <button type="button" class="ib" aria-label="保存"><Icon name="saveblue" :size="16" /></button>
            <span class="grow"></span>
            <button type="button" class="ib" aria-label="后退"><Icon name="back" :size="17" /></button>
            <button type="button" class="ib" aria-label="帮助"><Icon name="helpblue" :size="17" /></button>
            <button type="button" class="ib" aria-label="关闭"><Icon name="redx" :size="14" /></button>
          </div>
          <div class="cmp-tabs">
            <button v-for="c in ['cmpdoc', 'cmpfeat', 'cmpgeo']" :key="c" type="button" :class="{ on: c === 'cmpfeat' }" :aria-label="c"><Icon :name="c" :size="17" /></button>
          </div>
          <div class="lists">
            <div v-for="f in ['LARGE TWIST SQUARED SHAFT_10.SLDPRT(Default)', 'LARGE TWIST SQUARED SHAFT_2.SLDPRT(Default)']" :key="f" class="list">
              <h3>{{ f }}</h3>
              <ul>
                <li class="head"><Icon name="diff" :size="11" /><span>独特<small>(0)</small>/修改的<small>(2)</small> 特征</span></li>
                <li><Icon name="revblue" :size="16" />Revolve1</li>
                <li><Icon name="chamfer" :size="16" />Chamfer3</li>
              </ul>
            </div>
          </div>
          <label class="keep"><input v-model="keepColor" type="checkbox" /><span>关闭时保留颜色<small>(C)</small></span></label>
          <div class="table-box">
            <table>
              <thead><tr><th>参数</th><th>参考</th><th>已修改</th></tr></thead>
              <tbody><tr v-for="r in 17" :key="r"><td></td><td></td><td></td></tr></tbody>
              <tfoot><tr><td></td><td></td><td></td></tr></tfoot>
            </table>
          </div>
        </div>
      </section>
    </main>

    <footer class="status">
      <span>SOLIDWORKS Premium 2020 SP5.0</span>
      <div class="status-right">
        <span>在编辑 零件</span><Icon name="rebuild" :size="15" /><span class="units">MMGS</span><Icon name="tag" :size="17" />
      </div>
    </footer>

    <div class="mark">
      <div class="mark-logo"><strong>ICT</strong><em>CAD/CAM</em></div>
      <div class="mark-text"><p>智 誠 科 技 有 限 公 司</p><b>Intelligent CAD/CAM Technology Ltd.</b></div>
    </div>
  </div>
</template>

<script setup>
import { h, ref } from 'vue'

// glyph: optional letter drawn on top of the icon, { text, x, y, size, color }
const Icon = (props) => {
  const g = props.glyph
  return h('svg', { class: 'icon', width: props.size, height: props.size, viewBox: '0 0 20 20', 'aria-hidden': 'true' }, [
    h('use', { href: '#i-' + props.name }),
    g
      ? h('text', {
          x: g.x,
          y: g.y,
          fill: g.color,
          'font-size': g.size,
          'font-weight': 700,
          'font-family': 'Liberation Serif, serif',
          'text-anchor': 'middle'
        }, g.text)
      : null
  ])
}
Icon.props = ['name', 'size', 'glyph']

const query = ref('')
const keepColor = ref(false)
const cmdTab = ref('特征')

const menus = [
  { label: '文件', key: 'F' },
  { label: '编辑', key: 'E' },
  { label: '视图', key: 'V' },
  { label: '插入', key: 'I' },
  { label: '工具', key: 'T' },
  { label: '窗口', key: 'W' }
]

const quick = [
  { icon: 'home' },
  { icon: 'doc', drop: true },
  { icon: 'open', drop: true },
  { icon: 'save', drop: true },
  { icon: 'print', drop: true, dark: true },
  { icon: 'undo', drop: true },
  { icon: 'cursor', drop: true },
  { icon: 'traffic' },
  { icon: 'list' },
  { icon: 'gear', drop: true, dark: true }
]

const ribbon = [
  [
    { icon: 'extrude', label: ['拉伸凸', '台/基体'] },
    { icon: 'revolve', label: ['旋转凸', '台/基体'] },
    { items: [['sweep', '扫描'], ['loft', '放样凸台/基体'], ['boundary', '边界凸台/基体']] }
  ],
  [
    { icon: 'cutextrude', label: ['拉伸切', '除'] },
    { icon: 'hole', label: ['异型孔', '向导'], drop: true },
    { icon: 'cutrevolve', label: ['旋转切', '除'] },
    { items: [['cutsweep', '扫描切除'], ['cutloft', '放样切割'], ['boundary', '边界切除']] }
  ],
  [
    { icon: 'fillet', label: ['圆角'], drop: true, narrow: true },
    { icon: 'pattern', label: ['线性阵', '列'], drop: true },
    { items: [['rib', '筋'], ['draft', '拔模'], ['shell', '抽壳']] },
    { items: [['wrap', '包覆'], ['intersect', '相交'], ['mirror', '镜向']] }
  ],
  [
    { icon: 'refgeo', label: ['参考几', '何体'], drop: true },
    { icon: 'curve', label: ['曲线'], drop: true, narrow: true }
  ]
]

const cmdTabs = ['特征', '草图', '曲面', '标注', '评估', 'MBD Dimensions', 'SOLIDWORKS 插件']

const hud = [
  { icon: 'zoomfit' },
  { icon: 'zoomarea' },
  { icon: 'prevview' },
  { icon: 'section' },
  { icon: 'dynamic', glyph: { text: 'A', x: 15, y: 19, size: 13, color: '#2b7da8' } },
  { icon: 'orient', drop: true },
  { icon: 'display', drop: true },
  { icon: 'eye', drop: true },
  { icon: 'editapp' },
  { icon: 'scene', drop: true },
  { icon: 'monitor', drop: true }
]

const taskTabs = ['house', 'library', 'explorer', 'palette', 'ball', 'props', 'refresh', 'forum', 'compare']

const baseNodes = [
  { icon: 'history', label: 'History', open: true },
  { icon: 'sensors', label: 'Sensors' },
  { icon: 'folder', label: 'Annotations', open: true, glyph: { text: 'A', x: 10, y: 17, size: 13, color: '#1e6f9b' } },
  { icon: 'solid', label: '实体(1)', open: true },
  { icon: 'folder', label: 'Equations', open: true, glyph: { text: 'Σ', x: 10, y: 17, size: 13, color: '#222' } },
  { icon: 'material', label: '45#' },
  { icon: 'plane', label: 'Front Plane' },
  { icon: 'plane', label: 'Top Plane' },
  { icon: 'plane', label: 'Right Plane' },
  { icon: 'origin', label: 'Origin' },
  { icon: 'revblue', label: 'Revolve1', open: true }
]

// place / triad / box share one drawing space; tip is the near end of the shaft
const docs = [
  {
    title: 'LARGE TWIST SQUARED SHAFT_10.SLDPRT *',
    root: 'LARGE TWIST SQUARED SHAFT_10',
    active: true,
    nodes: baseNodes.slice(0, 10).concat({ icon: 'revblue', label: '' }),
    box: '252 180 608 344',
    place: 'translate(447 373) rotate(-12.5)',
    tip: -42,
    triad: 'translate(292 466)'
  },
  {
    title: 'LARGE TWIST SQUARED SHAFT_2.SLDPRT *',
    root: 'LARGE TWIST SQUARED SHAFT_2',
    active: false,
    nodes: baseNodes.concat({ icon: 'plane', label: '' }),
    box: '252 578 608 369',
    place: 'translate(450 785) rotate(-12.5) scale(1.07)',
    tip: -72,
    triad: 'translate(292 889)'
  }
]

// spline teeth run along the knurl and bow with its round end
const bow = (y) => Math.sqrt(1 - (y * y) / 800)
const toothLine = (y) => `M${(4 + 9 * bow(y)).toFixed(1)} ${y}L${(53 + 10 * bow(y)).toFixed(1)} ${y}`
const teeth = [-25, -21, -16, -10, -4, 2, 8, 14, 19, 23].map((y) => ({
  y,
  d: toothLine(y),
  c: Math.abs(y) > 18 ? '#5c5c5f' : '#98989b',
  w: Math.abs(y) > 18 ? 1 : 1.5
}))
const flutes = [-13, -7, -1, 5, 11, 17].map((y) => ({ y, d: toothLine(y) }))

const navPaths = ['M3 1v8M9 1L4 5l5 4z', 'M8 1L3 5l5 4z', 'M2 1l5 4-5 4z', 'M7 1v8M1 1l5 4-5 4z']
</script>

<style>
body {
  margin: 0;
}
</style>

<style scoped>
.app {
  position: relative;
  display: flex;
  flex-direction: column;
  min-height: 100vh;
  box-sizing: border-box;
  border-top: 2px solid #5c5a60;
  border-left: 1px solid #6b6b6e;
  background: #fff;
  color: #111;
  font: 12px/16px "Noto Sans", "Noto Sans CJK SC", sans-serif;
}

.app * {
  box-sizing: border-box;
}

.sprite {
  position: absolute;
}

button {
  font: inherit;
  color: inherit;
  margin: 0;
  padding: 0;
  border: 0;
  background: none;
  white-space: nowrap;
}

h1,
h2,
h3,
p,
ul {
  margin: 0;
  padding: 0;
  font-weight: 400;
  list-style: none;
}

:deep(.icon) {
  display: block;
  flex: none;
}

.ib {
  display: flex;
  align-items: center;
  justify-content: center;
}

.caret {
  flex: none;
  border: 3px solid transparent;
  border-top-color: #8b8b8b;
  border-bottom: 0;
}

.caret.dark {
  border-top-color: #333;
}

/* title bar */
.titlebar {
  display: flex;
  align-items: center;
  height: 35px;
  margin-top: 6px;
  border-top: 1px solid #8a8a8a;
  border-bottom: 1px solid #8a8a8a;
  background: #f7f7f7;
}

.brand {
  display: flex;
  align-items: center;
  gap: 4px;
  width: 143px;
  padding-left: 5px;
  color: #da291c;
}

.brand-mark {
  width: 22px;
  height: 20px;
}

.brand-name {
  font: italic 13px/16px "Open Sans", sans-serif;
}

.brand-name b {
  font-weight: 800;
}

.menu {
  display: flex;
  gap: 16px;
  font-size: 13px;
}

.menu small,
.list small,
.keep small {
  font-size: 10px;
}

.pinned {
  margin-left: auto;
  height: 33px;
  padding-right: 5px;
  border-right: 1px solid #a5a5a5;
  color: #777;
}

.quick {
  display: flex;
  align-items: center;
  gap: 10px;
  margin: 0 11px 0 21px;
}

.doc-name {
  width: 101px;
  font-size: 11px;
  white-space: nowrap;
}

.search {
  display: flex;
  align-items: center;
  gap: 5px;
  width: 201px;
  height: 23px;
  margin-left: 5px;
  padding: 0 4px;
  border: 1px solid #bdbdbd;
  background: #fff;
}

.search input {
  flex: 1;
  min-width: 0;
  padding: 0;
  border: 0;
  outline: 0;
  background: none;
  font: inherit;
  font-size: 13px;
}

.search input::placeholder {
  color: #6c6c6c;
}

.sys {
  display: flex;
  gap: 16px;
  margin: 0 12px 0 11px;
}

/* ribbon */
.ribbon {
  display: flex;
  height: 82px;
  border-bottom: 1px solid #999;
  background: #f7f7f7;
  color: #a8a8a8;
  font-size: 13px;
  line-height: 13px;
}

.group {
  display: flex;
  margin: 1px 0;
  padding: 0 3px 0 6px;
  border-right: 1px solid #c4c4c4;
}

.group-0 {
  padding-right: 8px;
}

.group-1 {
  padding: 0 3px 0 1px;
}

.group-1 .stack {
  padding-left: 4px;
}

.group-2 {
  padding: 0 6px 0 2px;
}

.group-2 .stack {
  padding-left: 2px;
}

.group-2 .stack + .stack {
  padding-left: 12px;
}

.group-3 {
  padding: 0 2px 0 1px;
}

.big {
  display: flex;
  flex-direction: column;
  align-items: center;
  width: 49px;
  padding-top: 12px;
}

.group-0 .big {
  width: 53px;
}

.big :deep(.icon) {
  margin-bottom: 1px;
}

.big.drop {
  padding: 5px 0 10px;
}

.big.drop .caret {
  margin-top: auto;
}

.big.narrow {
  width: 36px;
}

.stack {
  display: flex;
  flex-direction: column;
  padding-right: 4px;
}

.small {
  display: flex;
  align-items: center;
  gap: 6px;
  height: 26px;
}

.instant {
  display: flex;
  flex-direction: column;
  align-items: center;
  width: 60px;
  margin: 1px;
  padding-top: 11px;
  border: 1px solid #666;
  background: #ababab;
  color: #111;
  font-size: 11px;
}

/* body */
.body {
  display: flex;
  flex: 1;
}

.left {
  position: relative;
  display: flex;
  flex-direction: column;
  flex: 1;
  min-width: 0;
  background: #e4e4e4;
}

.cmd-tabs {
  display: flex;
  height: 22px;
}

.cmd-tabs button {
  min-width: 56px;
  padding: 0 8px;
  border-right: 1px solid #8a8a8a;
  border-bottom: 1px solid #8a8a8a;
  background: #d2d2d2;
  font-size: 13px;
}

.cmd-tabs button:nth-child(n + 6) {
  font-size: 11px;
}

.cmd-tabs .on {
  border-bottom-color: #f7f7f7;
  background: #f7f7f7;
}

.mdi {
  display: flex;
  flex-direction: column;
  flex: 1;
  padding: 3px 2px 0 1px;
  background: #fff;
}

.win {
  display: flex;
  flex-direction: column;
  padding: 0 7px 7px;
  margin-bottom: 1px;
  border: 1px solid #4c5158;
  border-radius: 7px 7px 0 0;
  background: #d7e4f1;
}

.win.active {
  border-color: #222;
  box-shadow: inset -1px -1px 0 #3fc6e0;
  background: #b9d1ea;
}

.win-title {
  display: flex;
  align-items: center;
  gap: 3px;
  height: 29px;
  margin: 0 -7px;
  padding: 5px 9px 0;
  border-radius: 6px 6px 0 0;
  background: linear-gradient(#bfcddb, #d7e4f1);
}

.active .win-title {
  background: linear-gradient(#98b4d2, #b7d0ea);
}

.win-title h2 {
  flex: 1;
  color: #8e9297;
  font-size: 12px;
  line-height: 16px;
}

.active .win-title h2 {
  color: #111;
}

.wb {
  display: flex;
  align-items: center;
  justify-content: center;
  width: 31px;
  height: 18px;
  border: 1px solid #7f93ad;
  border-radius: 2px;
  background: linear-gradient(#c9d7e6, #c0d1e4);
  box-shadow: inset 0 0 0 1px #dbe6f1;
}

.active .wb {
  border-color: #5f7b9e;
  background: linear-gradient(#bdd1e8 45%, #9fbbda 50%, #b4cde8);
}

.active .close {
  border-color: #6b2318;
  background: linear-gradient(#dc9a8e 45%, #b8402c 50%, #cf6a55);
}

.win-main {
  display: flex;
}

.pane {
  display: flex;
  flex-direction: column;
  flex: none;
  width: 242px;
  border-right: 1px solid #8d8d8d;
  background: #f7f7f7;
}

.splitter {
  display: flex;
  align-items: center;
  justify-content: center;
  height: 16px;
  margin: 5px 2px 0 0;
  border-top: 1px solid #b5b5b5;
  border-bottom: 1px solid #bdbdbd;
}

.splitter i,
.handle i {
  width: 6px;
  height: 6px;
  border: 1px solid #888;
  border-radius: 50%;
  background: #ddd;
}

.pane-tabs {
  display: flex;
  height: 26px;
  margin: 4px 2px 0 0;
  padding-left: 1px;
  border-bottom: 1px solid #aaa;
}

.pane-tabs button {
  display: flex;
  align-items: center;
  justify-content: center;
  width: 40px;
  border: 1px solid #8a8a8a;
  border-left: 0;
  border-bottom: 0;
  background: #d2d2d2;
}

.pane-tabs .on,
.pane-tabs .more {
  background: #f7f7f7;
}

.pane-tabs .more {
  width: 20px;
  margin-left: auto;
  border: 0;
}

.more path,
.vbar path,
.hbar path {
  fill: none;
  stroke: #444;
  stroke-width: 2;
}

.filter {
  display: flex;
  align-items: center;
  height: 26px;
  margin: 0 5px 0 4px;
  padding-left: 2px;
  border: 1px solid #c0c0c0;
}

.filter input {
  flex: 1;
  min-width: 0;
  border: 0;
  background: none;
}

.tree-box {
  display: flex;
  margin-right: 2px;
}

.tree {
  flex: 1;
  min-width: 0;
  height: 246px;
  padding-top: 1px;
  overflow: hidden;
}

.tree.tall {
  height: 270px;
}

.tree li {
  display: flex;
  align-items: center;
  gap: 4px;
  height: 22px;
  padding-left: 9px;
  white-space: nowrap;
}

.tree .root {
  padding-left: 4px;
}

.arrow {
  width: 13px;
  border: 4px solid transparent;
  border-right: 0;
}

.arrow.show {
  width: 4px;
  margin-right: 9px;
  border-left-color: #555;
}

.vbar {
  display: flex;
  flex-direction: column;
  align-items: center;
  width: 15px;
  padding: 4px 0;
  background: #f0f0f0;
}

.vbar i {
  width: 100%;
  height: 101px;
  margin: 4px 0 auto;
  background: #cdcdcd;
}

.vbar i.tall {
  height: 123px;
}

.hbar {
  display: flex;
  align-items: center;
  height: 16px;
  margin-right: 2px;
  padding: 0 19px 0 3px;
  background: #f0f0f0;
}

.hbar i {
  width: 92px;
  height: 15px;
  margin: 0 auto 0 4px;
  background: #cdcdcd;
}

.pane-end {
  height: 5px;
  margin-right: 2px;
  border-bottom: 1px solid #aaa;
}

.view {
  position: relative;
  flex: 1;
  min-width: 0;
  background: #c4c8d3;
}

.scene {
  position: absolute;
  inset: 0;
  width: 100%;
  height: 100%;
}

.hud {
  position: relative;
  display: flex;
  align-items: center;
  justify-content: center;
  gap: 6px;
  padding: 6px 6px 0 0;
}

.hud .caret {
  margin: 0 1px;
  border-top-color: #85878d;
}

.handle {
  position: absolute;
  top: 50%;
  left: 0;
  display: flex;
  align-items: center;
  justify-content: center;
  width: 8px;
  height: 38px;
  margin-top: -19px;
  border: 1px solid #8d8d8d;
  border-left: 0;
  background: #f7f7f7;
}

.sheets {
  display: flex;
  height: 15px;
  border-top: 1px solid #8d8d8d;
  background: #fafafa;
}

.nav {
  display: flex;
  gap: 1px;
  width: 66px;
  padding: 0 1px;
  background: #777;
}

.nav button {
  flex: 1;
  display: flex;
  align-items: center;
  justify-content: center;
  background: #a9a9a9;
}

.nav path {
  fill: #8a8a8a;
  stroke: #7b7b7b;
}

.sheet {
  padding: 0 7px;
  border-right: 1px solid #8a8a8a;
  background: #d2d2d2;
  line-height: 12px;
}

.sheet:last-child {
  padding-right: 12px;
}

.sheet.on {
  padding: 0 9px 0 12px;
  background: #f7f7f7;
  font-size: 13px;
}

.mini {
  display: flex;
  align-items: center;
  align-self: flex-start;
  gap: 3px;
  width: 159px;
  height: 28px;
  padding: 0 4px;
  border: 1px solid #4c5158;
  border-radius: 7px 7px 0 0;
  background: #c6d5e5;
  color: #8e9297;
}

.mini span {
  flex: 1;
}

.task-tabs {
  position: absolute;
  top: 50px;
  right: 0;
  width: 26px;
  border: 1px solid #8a8a8a;
  border-right: 0;
}

.task-tabs button {
  display: flex;
  align-items: center;
  justify-content: center;
  width: 100%;
  height: 24px;
  border-bottom: 1px solid #8a8a8a;
  background: #dcdcdc;
}

.task-tabs .on {
  border-bottom: 0;
  background: #f7f7f7;
}

/* compare panel */
.panel {
  display: flex;
  flex-direction: column;
  width: 533px;
  border-left: 1px solid #777;
  background: #f0f0f0;
}

.panel-head {
  display: flex;
  align-items: center;
  gap: 5px;
  height: 22px;
  padding: 0 5px 0 9px;
  border-bottom: 1px solid #222;
  background: #a9aaae;
}

.panel-head h1 {
  flex: 1;
  font-size: 12px;
  font-weight: 700;
  text-align: center;
}

.panel-body {
  display: flex;
  flex-direction: column;
  flex: 1;
  margin: 0 5px 5px 7px;
  background: #e2e5ea;
}

.tools {
  display: flex;
  align-items: center;
  gap: 7px;
  height: 26px;
  padding-bottom: 3px;
}

.grow {
  flex: 1;
}

.cmp-tabs {
  display: flex;
  align-items: flex-end;
  height: 21px;
  padding-left: 2px;
  border-bottom: 1px solid #d5d5d5;
  background: #efefef;
}

.cmp-tabs button {
  display: flex;
  align-items: center;
  justify-content: center;
  width: 20px;
  height: 18px;
  border: 1px solid #d5d5d5;
  border-bottom: 0;
}

.cmp-tabs .on {
  width: 24px;
  height: 20px;
  background: #fff;
}

.lists {
  display: flex;
  gap: 5px;
  padding: 0 3px 0 4px;
}

.list {
  flex: 1;
  min-width: 0;
}

.list h3 {
  height: 23px;
  font: 11px/20px "Open Sans", sans-serif;
  white-space: nowrap;
}

.list ul {
  height: 355px;
  border: 1px solid #828790;
  background: #fff;
  font-size: 11px;
}

.list li {
  display: flex;
  align-items: center;
  gap: 5px;
  height: 18px;
  padding-left: 23px;
}

.list .head {
  gap: 6px;
  height: 19px;
  padding-left: 7px;
  font-size: 13px;
}

.list .head span {
  padding: 0 1px;
  background: #f0f0f0;
}

.keep {
  display: flex;
  align-items: center;
  gap: 2px;
  height: 24px;
  padding-left: 4px;
  font-size: 13px;
}

.keep input {
  appearance: none;
  width: 13px;
  height: 13px;
  margin: 0 1px 0 0;
  border: 1px solid #333;
  background: #fff;
}

.keep input:checked {
  background: #1e6f9b;
}

.table-box {
  flex: 1;
  margin: 0 4px 8px;
  border: 1px solid #646464;
  background: #fff;
}

table {
  width: 100%;
  table-layout: fixed;
  border-collapse: separate;
  border-spacing: 0;
}

th {
  height: 24px;
  padding: 0 6px 2px;
  border-right: 1px solid #e2e2e2;
  font-size: 13px;
  font-weight: 400;
  text-align: left;
}

td {
  height: 21px;
  padding: 0;
  border-right: 1px solid #ececec;
  border-bottom: 1px solid #ececec;
}

tfoot td {
  height: 7px;
  border-bottom: 0;
}

/* status bar */
.status {
  display: flex;
  justify-content: space-between;
  align-items: center;
  height: 20px;
  padding-left: 1px;
  border-top: 1px solid #8a8a8a;
  background: #f7f7f7;
}

.status-right {
  display: flex;
  align-items: center;
  gap: 34px;
  padding-right: 22px;
}

.units {
  width: 56px;
  margin-left: 32px;
  color: #a5a5a5;
}

/* company mark over the bottom corner */
.mark {
  position: absolute;
  right: 4px;
  bottom: 1px;
  display: flex;
  gap: 4px;
  pointer-events: none;
}

.mark-logo {
  display: flex;
  flex-direction: column;
  width: 69px;
  height: 68px;
  border: 3px solid #e8697c;
  border-radius: 8px;
  color: #e8697c;
  text-align: center;
}

.mark-logo strong {
  flex: 1;
  border-bottom: 4px solid #e8697c;
  font: 700 35px/36px "Liberation Serif", serif;
}

.mark-logo em {
  height: 21px;
  background: #fdeef0;
  font: 700 12px/20px "Liberation Sans", sans-serif;
}

.mark-text {
  padding-top: 9px;
  color: #58585a;
  white-space: nowrap;
}

.mark-text p {
  padding-bottom: 3px;
  border-bottom: 2px solid #e0485c;
  font: 20px/26px "Noto Sans CJK TC", sans-serif;
}

.mark-text b {
  display: block;
  font: 700 18px/24px "Liberation Sans", sans-serif;
}
</style>
